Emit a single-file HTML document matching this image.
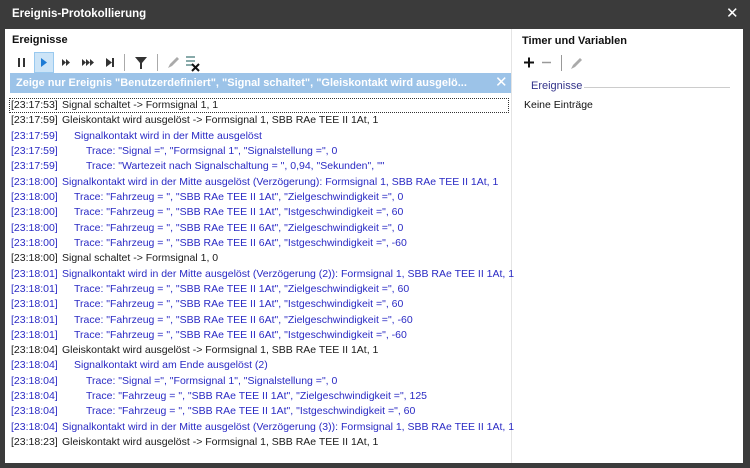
<!DOCTYPE html>
<html><head><meta charset="utf-8"><style>
*{margin:0;padding:0;box-sizing:border-box}
body{width:750px;height:468px;background:#3b3b3b;font-family:"Liberation Sans","DejaVu Sans",sans-serif;font-size:10.5px;position:relative;overflow:hidden}
.title{position:absolute;left:12px;top:8px;color:#fff;font-weight:bold;font-size:11.5px}
.close{position:absolute;left:726px;top:4px;color:#fff;font-size:15px;font-weight:bold}
.main{position:absolute;left:5px;top:29px;width:738px;height:434px;background:#fff}
.div{position:absolute;left:511px;top:29px;width:1px;height:434px;background:#e4e4e4}
.h{position:absolute;font-weight:bold;font-size:11px;color:#111}
.ic{position:absolute}
.bar{position:absolute;left:10px;top:73px;width:501px;height:20px;background:#9cc3e8;color:#fff;font-weight:bold;font-size:11px;line-height:20px;padding-left:6px;white-space:nowrap;overflow:hidden}
.r{position:absolute;left:9px;height:15px;line-height:15px;white-space:nowrap;color:#1a1a1a;width:500px}
.b{color:#2a2ac4}
.r span{position:absolute;top:0}
.t{left:2px}
.focus{outline:1px dotted #333;outline-offset:-1px}
</style></head><body>
<div class="title">Ereignis-Protokollierung</div>
<div class="close">✕</div>
<div class="main"></div>
<div class="div"></div>
<div class="h" style="left:12px;top:34px">Ereignisse</div>
<div class="h" style="left:522px;top:35px">Timer und Variablen</div>
<svg class="ic" style="left:10px;top:52px" width="200" height="21">
<rect x="24.5" y="0.5" width="19" height="20" fill="#cce4f7" stroke="#99c9ef"/>
<rect x="8" y="6" width="2" height="9" fill="#333"/><rect x="13" y="6" width="2" height="9" fill="#333"/>
<path d="M31 6 L37 10.5 L31 15Z" fill="#1c7ad4"/>
<path d="M52 7 L56 10.5 L52 14Z M56 7 L60 10.5 L56 14Z" fill="#333"/>
<path d="M72 7 L76 10.5 L72 14Z M76 7 L80 10.5 L76 14Z M80 7 L84 10.5 L80 14Z" fill="#333"/>
<path d="M96 6 L102 10.5 L96 15Z" fill="#333"/><rect x="102" y="6" width="2" height="9" fill="#333"/>
<rect x="114" y="2" width="1" height="17" fill="#aaa"/>
<path d="M125 5 H137 L132 11 V17 H130 V11Z" fill="#333"/>
<rect x="147" y="2" width="1" height="17" fill="#aaa"/>
<path d="M158 16 L160 12 L167 5 L169 7 L162 14Z" fill="#aaa"/>
<rect x="176" y="4" width="9" height="2" fill="#8aa"/><rect x="176" y="8" width="9" height="2" fill="#8aa"/><rect x="176" y="12" width="6" height="2" fill="#8aa"/>
<path d="M182 12 L189 19 M189 12 L182 19" stroke="#111" stroke-width="2"/>
</svg>
<div class="bar">Zeige nur Ereignis "Benutzerdefiniert", "Signal schaltet", "Gleiskontakt wird ausgelö...<span style="position:absolute;left:482px;top:0;font-size:15px;font-weight:normal;background:#9cc3e8;padding-left:3px">✕</span></div>
<svg class="ic" style="left:520px;top:54px" width="80" height="18">
<path d="M4 8.5 H14 M9 3.5 V13.5" stroke="#111" stroke-width="2"/>
<path d="M22 8.5 H31" stroke="#999" stroke-width="1.5"/>
<rect x="41" y="1" width="1" height="16" fill="#999"/>
<path d="M51 15 L53 11 L60 4 L62 6 L55 13Z" fill="#aaa"/>
</svg>
<div style="position:absolute;left:531px;top:80px;color:#33338a;font-size:11px">Ereignisse</div>
<div style="position:absolute;left:584px;top:87px;width:146px;height:1px;background:#ccc"></div>
<div style="position:absolute;left:524px;top:99px;color:#111">Keine Einträge</div>

<div class="r focus" style="top:98px"><span class="t">[23:17:53]</span><span style="left:53px">Signal schaltet -&gt; Formsignal 1, 1</span></div>
<div class="r" style="top:113.3px"><span class="t">[23:17:59]</span><span style="left:53px">Gleiskontakt wird ausgelöst -&gt; Formsignal 1, SBB RAe TEE II 1At, 1</span></div>
<div class="r b" style="top:128.6px"><span class="t">[23:17:59]</span><span style="left:65px">Signalkontakt wird in der Mitte ausgelöst</span></div>
<div class="r b" style="top:144px"><span class="t">[23:17:59]</span><span style="left:77px">Trace: "Signal =", "Formsignal 1", "Signalstellung =", 0</span></div>
<div class="r b" style="top:159.3px"><span class="t">[23:17:59]</span><span style="left:77px">Trace: "Wartezeit nach Signalschaltung = ", 0,94, "Sekunden", ""</span></div>
<div class="r b" style="top:174.6px"><span class="t">[23:18:00]</span><span style="left:53px">Signalkontakt wird in der Mitte ausgelöst (Verzögerung): Formsignal 1, SBB RAe TEE II 1At, 1</span></div>
<div class="r b" style="top:189.9px"><span class="t">[23:18:00]</span><span style="left:65px">Trace: "Fahrzeug = ", "SBB RAe TEE II 1At", "Zielgeschwindigkeit =", 0</span></div>
<div class="r b" style="top:205.2px"><span class="t">[23:18:00]</span><span style="left:65px">Trace: "Fahrzeug = ", "SBB RAe TEE II 1At", "Istgeschwindigkeit =", 60</span></div>
<div class="r b" style="top:220.6px"><span class="t">[23:18:00]</span><span style="left:65px">Trace: "Fahrzeug = ", "SBB RAe TEE II 6At", "Zielgeschwindigkeit =", 0</span></div>
<div class="r b" style="top:235.9px"><span class="t">[23:18:00]</span><span style="left:65px">Trace: "Fahrzeug = ", "SBB RAe TEE II 6At", "Istgeschwindigkeit =", -60</span></div>
<div class="r" style="top:251.2px"><span class="t">[23:18:00]</span><span style="left:53px">Signal schaltet -&gt; Formsignal 1, 0</span></div>
<div class="r b" style="top:266.5px"><span class="t">[23:18:01]</span><span style="left:53px">Signalkontakt wird in der Mitte ausgelöst (Verzögerung (2)): Formsignal 1, SBB RAe TEE II 1At, 1</span></div>
<div class="r b" style="top:281.8px"><span class="t">[23:18:01]</span><span style="left:65px">Trace: "Fahrzeug = ", "SBB RAe TEE II 1At", "Zielgeschwindigkeit =", 60</span></div>
<div class="r b" style="top:297.2px"><span class="t">[23:18:01]</span><span style="left:65px">Trace: "Fahrzeug = ", "SBB RAe TEE II 1At", "Istgeschwindigkeit =", 60</span></div>
<div class="r b" style="top:312.5px"><span class="t">[23:18:01]</span><span style="left:65px">Trace: "Fahrzeug = ", "SBB RAe TEE II 6At", "Zielgeschwindigkeit =", -60</span></div>
<div class="r b" style="top:327.8px"><span class="t">[23:18:01]</span><span style="left:65px">Trace: "Fahrzeug = ", "SBB RAe TEE II 6At", "Istgeschwindigkeit =", -60</span></div>
<div class="r" style="top:343.1px"><span class="t">[23:18:04]</span><span style="left:53px">Gleiskontakt wird ausgelöst -&gt; Formsignal 1, SBB RAe TEE II 1At, 1</span></div>
<div class="r b" style="top:358.4px"><span class="t">[23:18:04]</span><span style="left:65px">Signalkontakt wird am Ende ausgelöst (2)</span></div>
<div class="r b" style="top:373.8px"><span class="t">[23:18:04]</span><span style="left:77px">Trace: "Signal =", "Formsignal 1", "Signalstellung =", 0</span></div>
<div class="r b" style="top:389.1px"><span class="t">[23:18:04]</span><span style="left:77px">Trace: "Fahrzeug = ", "SBB RAe TEE II 1At", "Zielgeschwindigkeit =", 125</span></div>
<div class="r b" style="top:404.4px"><span class="t">[23:18:04]</span><span style="left:77px">Trace: "Fahrzeug = ", "SBB RAe TEE II 1At", "Istgeschwindigkeit =", 60</span></div>
<div class="r b" style="top:419.7px"><span class="t">[23:18:04]</span><span style="left:53px">Signalkontakt wird in der Mitte ausgelöst (Verzögerung (3)): Formsignal 1, SBB RAe TEE II 1At, 1</span></div>
<div class="r" style="top:435px"><span class="t">[23:18:23]</span><span style="left:53px">Gleiskontakt wird ausgelöst -&gt; Formsignal 1, SBB RAe TEE II 1At, 1</span></div>
</body></html>
